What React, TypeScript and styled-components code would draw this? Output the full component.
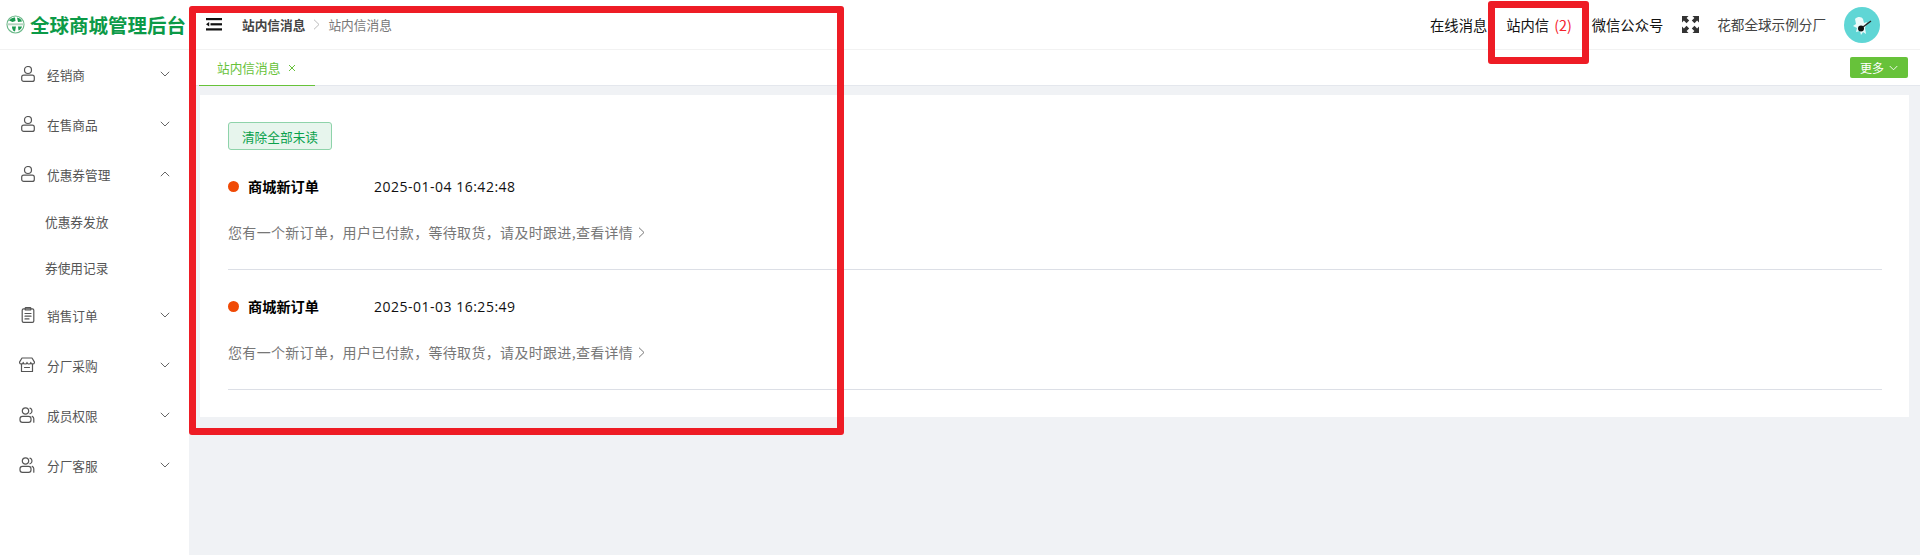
import React from "react";
import styled, { createGlobalStyle } from "styled-components";

const Global = createGlobalStyle`
  html, body { margin: 0; padding: 0; height: 100%; background: #fff; }
  body { font-family: "Noto Sans CJK SC", "Open Sans", sans-serif; overflow: hidden; }
  #root { height: 100%; }
`;

const Page = styled.div`
  position: relative;
  display: flex;
  width: 1920px;
  height: 555px;
  overflow: hidden;
`;

const Sidebar = styled.aside`
  width: 189px;
  flex: none;
  background: #fff;
`;

const Brand = styled.div`
  height: 49px;
  display: flex;
  align-items: center;
  gap: 5px;
  padding-left: 6px;
  border-bottom: 1px solid #f2f2f2;
  box-sizing: content-box;
`;

const BrandTitle = styled.span`
  font-size: 19.5px;
  font-weight: 700;
  color: #0b9a47;
  white-space: nowrap;
  line-height: 1;
`;

const MenuList = styled.nav`
  display: flex;
  flex-direction: column;
  margin-top: -1px;
`;

const MenuRow = styled.div`
  height: 50px;
  display: flex;
  align-items: center;
  padding-left: 20px;
  color: #555;
  font-size: 12.7px;
`;

const MenuIcon = styled.span`
  width: 16px;
  height: 16px;
  display: flex;
  margin-right: 11px;
`;

const MenuText = styled.span`
  flex: 1;
`;

const Caret = styled.span`
  width: 10px;
  display: flex;
  margin-right: 19px;
`;

const SubRow = styled.div`
  height: 45.5px;
  display: flex;
  align-items: center;
  padding-left: 45px;
  color: #555;
  font-size: 12.7px;
`;

const Main = styled.main`
  flex: 1;
  min-width: 0;
  display: flex;
  flex-direction: column;
  background: #f0f2f5;
`;

const Header = styled.header`
  height: 49px;
  display: flex;
  align-items: center;
  background: #fff;
  border-bottom: 1px solid #f2f2f2;
  box-sizing: content-box;
  padding-left: 17px;
  padding-right: 40px;
`;

const Crumbs = styled.div`
  display: flex;
  align-items: center;
  margin-left: 20px;
  font-size: 12.7px;
  flex: 1;
  margin-top: -1px;
`;

const CrumbStrong = styled.span`
  font-weight: 700;
  color: #444;
`;

const CrumbSep = styled.span`
  display: flex;
  margin: 0 8px;
`;

const CrumbLight = styled.span`
  color: #777;
`;

const TopLink = styled.span<{ $gap: number }>`
  font-size: 14.3px;
  color: #111;
  margin-right: ${(p) => p.$gap}px;
  white-space: nowrap;
  margin-top: -1px;
`;

const Count = styled.span`
  color: #f5222d;
  margin-left: 5px;
`;

const ExpandBox = styled.span`
  display: flex;
  margin-right: 18px;
`;

const Org = styled.span`
  font-size: 13.6px;
  color: #444;
  margin-right: 18px;
  white-space: nowrap;
  margin-top: -1px;
`;

const Avatar = styled.span`
  width: 36px;
  height: 36px;
  border-radius: 50%;
  background: #5fd6d5;
  display: flex;
  align-items: center;
  justify-content: center;
`;

const TabBar = styled.div`
  height: 36px;
  display: flex;
  align-items: flex-end;
  justify-content: space-between;
  background: #fff;
  border-bottom: 1px solid #e4e7ed;
  box-sizing: border-box;
  padding-left: 10px;
  padding-right: 12px;
`;

const Tab = styled.div`
  width: 116px;
  height: 36px;
  margin-bottom: -1px;
  display: flex;
  align-items: center;
  padding-left: 18px;
  box-sizing: border-box;
  gap: 8px;
  color: #67c23a;
  font-size: 12.7px;
  border-bottom: 1px solid #67c23a;
`;

const TabClose = styled.span`
  display: flex;
`;

const MoreButton = styled.div`
  width: 58px;
  height: 21px;
  align-self: flex-start;
  margin-top: 7px;
  border-radius: 2px;
  background: #67c23a;
  color: #fff;
  font-size: 12px;
  display: flex;
  align-items: center;
  justify-content: center;
  gap: 5px;
`;

const Content = styled.div`
  padding: 9px 11px 0 11px;
`;

const Card = styled.section`
  background: #fff;
  height: 322px;
  box-sizing: border-box;
  padding: 27px 27px 0 28px;
`;

const ClearButton = styled.div`
  width: 104px;
  height: 28px;
  box-sizing: border-box;
  border: 1px solid #8ed3aa;
  border-radius: 3px;
  background: #e7f5ed;
  color: #0aa14c;
  font-size: 12.7px;
  display: flex;
  align-items: center;
  justify-content: center;
`;

const MessageList = styled.div`
  margin-top: 21px;
  display: flex;
  flex-direction: column;
  gap: 21px;
`;

const Message = styled.article`
  height: 99px;
  box-sizing: border-box;
  border-bottom: 1px solid #dcdfe6;
`;

const MessageHead = styled.div`
  height: 30px;
  display: flex;
  align-items: center;
`;

const Dot = styled.span`
  width: 11px;
  height: 11px;
  border-radius: 50%;
  background: #f04a06;
  margin-right: 9px;
`;

const MessageTitle = styled.span`
  width: 126px;
  font-size: 14.2px;
  font-weight: 700;
  color: #000;
`;

const MessageTime = styled.span`
  font-family: "Open Sans", sans-serif;
  font-size: 14px;
  letter-spacing: 0.5px;
  color: #111;
`;

const MessageBody = styled.div`
  margin-top: 20px;
  display: flex;
  align-items: center;
  gap: 5px;
  font-size: 14px;
  letter-spacing: 0.32px;
  color: #777;
  line-height: 22px;
`;

const Mark = styled.div<{ $l: number; $t: number; $w: number; $h: number; $b: number }>`
  position: absolute;
  left: ${(p) => p.$l}px;
  top: ${(p) => p.$t}px;
  width: ${(p) => p.$w}px;
  height: ${(p) => p.$h}px;
  box-sizing: border-box;
  border: ${(p) => p.$b}px solid #ee1c25;
  border-radius: 3px;
  pointer-events: none;
`;

const stroke = { fill: "none", stroke: "#555", strokeWidth: 1.2, strokeLinecap: "round" as const, strokeLinejoin: "round" as const };

const UserIcon = () => (
  <svg width="16" height="16" viewBox="0 0 16 16" {...stroke}>
    <circle cx="8" cy="4" r="3.500" />
    <rect x="1.700" y="9.200" width="12.600" height="6.200" rx="2" />
  </svg>
);
const ClipIcon = () => (
  <svg width="16" height="16" viewBox="0 0 16 16" {...stroke}>
    <rect x="2.200" y="1.800" width="11.600" height="13.600" rx="1.400" />
    <rect x="5.200" y="0.600" width="5.600" height="2.400" rx="0.600" />
    <path d="M5 6.500h6M5 9.200h6M5 11.900h4" />
  </svg>
);
const StoreIcon = () => (
  <svg width="16" height="16" viewBox="0 0 16 16" {...stroke} style={{ marginLeft: -1 }}>
    <path d="M3 1h10l2.500 4.200c0 1.200-1 1.800-1.900 1.800-1 0-1.800-.7-1.800-1.600 0 .9-1 1.600-1.900 1.600S8 6.300 8 5.400C8 6.300 7 7 6.100 7S4.200 6.300 4.200 5.400C4.200 6.300 3.400 7 2.400 7 1.500 7 .5 6.400.5 5.200z" />
    <path d="M2.500 7v7.500h11V7M5.500 10.500h5" />
  </svg>
);
const UsersIcon = () => (
  <svg width="16" height="16" viewBox="0 0 16 16" {...stroke} style={{ marginLeft: -1 }}>
    <circle cx="6.500" cy="4" r="3.200" />
    <rect x="1" y="9.300" width="11" height="6" rx="2.400" />
    <path d="M11 1.200c1.400.4 2 1.500 2 2.800s-.6 2.300-2 2.800M14.800 15.200v-3.400c0-1.100-.6-2-1.600-2.400" />
  </svg>
);
const Down = () => (
  <svg width="10" height="6" viewBox="0 0 10 6" fill="none" stroke="#666" strokeWidth="1">
    <path d="M.8.800 5 5 9.200.800" />
  </svg>
);
const Up = () => (
  <svg width="10" height="6" viewBox="0 0 10 6" fill="none" stroke="#666" strokeWidth="1">
    <path d="M.8 5.200 5 1l4.200 4.200" />
  </svg>
);
const Logo = () => (
  <svg width="19" height="19" viewBox="0 0 19 19">
    <circle cx="9.500" cy="9.500" r="8.500" fill="#fff" stroke="#6db98a" strokeWidth="1.200" />
    <path d="M3 5.500C5 3 8 2 9 2.500l.5 3.500-3 1zM11 2.500c2 .3 4.500 2 5 4l-4 .5zM6 11.500h4l-1 5c-2 0-3-3-3-5zM12 11.500h4c-.5 2-2 3.500-3.500 4z" fill="#1a9a50" />
    <rect x="1" y="8.300" width="17" height="2" fill="#b5d4c1" />
  </svg>
);
const Hamburger = () => (
  <svg width="16" height="13" viewBox="0 0 16 13" fill="#111">
    <rect x="0" y="0" width="16" height="2.200" />
    <rect x="4.500" y="5.200" width="11.500" height="2.200" />
    <rect x="0" y="10.300" width="16" height="2.200" />
    <path d="M0 6.300 3.200 4v4.600z" />
  </svg>
);
const CrumbArrow = () => (
  <svg width="7" height="11" viewBox="0 0 7 11" fill="none" stroke="#bbb" strokeWidth="1">
    <path d="m1 .7 5 4.800-5 4.800" />
  </svg>
);
const Expand = () => (
  <svg width="17" height="17" viewBox="0 0 17 17" fill="#333">
    <path d="M0 0h6.500L4.600 1.900 7.200 4.500 4.500 7.200 1.900 4.600 0 6.500zM17 0v6.500l-1.900-1.900-2.600 2.600-2.700-2.700 2.600-2.600L10.500 0zM0 17v-6.500l1.900 1.900 2.600-2.600 2.700 2.700-2.600 2.600L6.500 17zM17 17h-6.500l1.900-1.900-2.600-2.600 2.700-2.700 2.600 2.600 1.900-1.900z" />
  </svg>
);
const Mascot = () => (
  <svg width="36" height="36" viewBox="0 0 36 36">
    <path d="M11 12c3-3 7-2 8 0l1 4 3-1-2 6 1 6-3-2-2 3-1-4-4 1 1-4-4-2 3-2z" fill="#eafafa" />
    <circle cx="17" cy="21.500" r="3" fill="#111" />
    <path d="M19 20 27 14" stroke="#222" strokeWidth="1.300" />
  </svg>
);
const Close = () => (
  <svg width="8" height="8" viewBox="0 0 8 8" stroke="#67c23a" strokeWidth="1">
    <path d="m1 1 6 6M7 1 1 7" />
  </svg>
);
const MoreCaret = () => (
  <svg width="9" height="6" viewBox="0 0 10 6" fill="none" stroke="#fff" strokeWidth="1">
    <path d="M.8.800 5 5 9.200.800" />
  </svg>
);
const Go = () => (
  <svg width="7" height="11" viewBox="0 0 7 11" fill="none" stroke="#777" strokeWidth="1">
    <path d="m1 .7 5 4.800-5 4.800" />
  </svg>
);

const messages = [
  { time: "2025-01-04 16:42:48" },
  { time: "2025-01-03 16:25:49" },
];

export default function App() {
  return (
    <Page>
      <Global />
      <Sidebar>
        <Brand>
          <Logo />
          <BrandTitle>全球商城管理后台</BrandTitle>
        </Brand>
        <MenuList>
          <MenuRow><MenuIcon><UserIcon /></MenuIcon><MenuText>经销商</MenuText><Caret><Down /></Caret></MenuRow>
          <MenuRow><MenuIcon><UserIcon /></MenuIcon><MenuText>在售商品</MenuText><Caret><Down /></Caret></MenuRow>
          <MenuRow><MenuIcon><UserIcon /></MenuIcon><MenuText>优惠券管理</MenuText><Caret><Up /></Caret></MenuRow>
          <SubRow>优惠券发放</SubRow>
          <SubRow>券使用记录</SubRow>
          <MenuRow><MenuIcon><ClipIcon /></MenuIcon><MenuText>销售订单</MenuText><Caret><Down /></Caret></MenuRow>
          <MenuRow><MenuIcon><StoreIcon /></MenuIcon><MenuText>分厂采购</MenuText><Caret><Down /></Caret></MenuRow>
          <MenuRow><MenuIcon><UsersIcon /></MenuIcon><MenuText>成员权限</MenuText><Caret><Down /></Caret></MenuRow>
          <MenuRow><MenuIcon><UsersIcon /></MenuIcon><MenuText>分厂客服</MenuText><Caret><Down /></Caret></MenuRow>
        </MenuList>
      </Sidebar>
      <Main>
        <Header>
          <Hamburger />
          <Crumbs>
            <CrumbStrong>站内信消息</CrumbStrong>
            <CrumbSep><CrumbArrow /></CrumbSep>
            <CrumbLight>站内信消息</CrumbLight>
          </Crumbs>
          <TopLink $gap={19}>在线消息</TopLink>
          <TopLink $gap={20}>站内信<Count>(2)</Count></TopLink>
          <TopLink $gap={19}>微信公众号</TopLink>
          <ExpandBox><Expand /></ExpandBox>
          <Org>花都全球示例分厂</Org>
          <Avatar><Mascot /></Avatar>
        </Header>
        <TabBar>
          <Tab>站内信消息<TabClose><Close /></TabClose></Tab>
          <MoreButton>更多<MoreCaret /></MoreButton>
        </TabBar>
        <Content>
          <Card>
            <ClearButton>清除全部未读</ClearButton>
            <MessageList>
              {messages.map((m) => (
                <Message key={m.time}>
                  <MessageHead>
                    <Dot />
                    <MessageTitle>商城新订单</MessageTitle>
                    <MessageTime>{m.time}</MessageTime>
                  </MessageHead>
                  <MessageBody>您有一个新订单，用户已付款，等待取货，请及时跟进,查看详情<Go /></MessageBody>
                </Message>
              ))}
            </MessageList>
          </Card>
        </Content>
      </Main>
      <Mark $l={189} $t={6} $w={655} $h={429} $b={7} />
      <Mark $l={1488} $t={1} $w={101} $h={63} $b={7} />
    </Page>
  );
}
